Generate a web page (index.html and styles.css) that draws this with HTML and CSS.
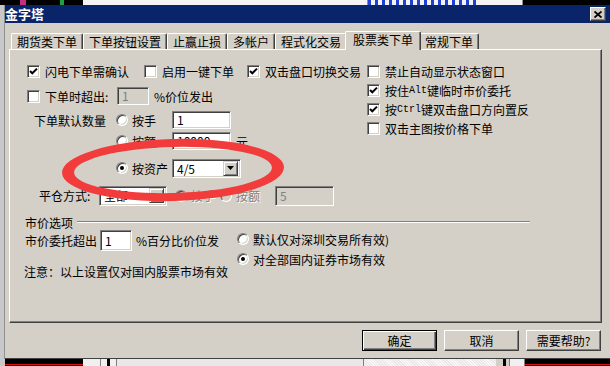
FILE: index.html
```html
<!DOCTYPE html>
<html lang="zh-CN">
<head>
  <meta charset="UTF-8">
  <title>金字塔</title>
  <link rel="stylesheet" href="styles.css">
</head>
<body>
<div class="screen">
  <!-- bits of the app behind the dialog -->
  <div class="strip-top">
    <div class="st-chart"></div>
    <div class="st-light"></div>
    <div class="st-blue"></div>
    <div class="st-light small"></div>
    <div class="st-dark"></div>
  </div>

  <div class="middle">
    <div class="strip-left"></div>

    <div class="dialog">
      <div class="titlebar">
        <span class="title">金字塔</span>
        <span class="close-btn">
          <svg width="8" height="7" viewBox="0 0 8 7"><path d="M0.5 0.5 L7.5 6.5 M7.5 0.5 L0.5 6.5" stroke="#000" stroke-width="1.8"/></svg>
        </span>
      </div>

      <div class="tabs">
        <div class="tab">期货类下单</div>
        <div class="tab">下单按钮设置</div>
        <div class="tab">止赢止损</div>
        <div class="tab">多帐户</div>
        <div class="tab">程式化交易</div>
        <div class="tab active">股票类下单</div>
        <div class="tab">常规下单</div>
      </div>

      <div class="panel">
        <div class="top">
          <div class="col-left">
            <div class="row row-a">
              <div class="opt w1"><span class="check on"><svg width="11" height="11" viewBox="0 0 11 11"><path d="M2 5 L4.3 7.3 L9 2.6" stroke="#000" stroke-width="2" fill="none"/></svg></span>闪电下单需确认</div>
              <div class="opt w2"><span class="check"></span>启用一键下单</div>
              <div class="opt w3"><span class="check on"><svg width="11" height="11" viewBox="0 0 11 11"><path d="M2 5 L4.3 7.3 L9 2.6" stroke="#000" stroke-width="2" fill="none"/></svg></span>双击盘口切换交易</div>
            </div>

            <div class="row row-b">
              <div class="opt"><span class="check"></span><span class="lbl-over">下单时超出:</span></div>
              <div class="field disabled small">1</div>
              <span class="after">%价位发出</span>
            </div>

            <div class="qty">
              <div class="qrow">
                <div class="qlabel">下单默认数量</div>
                <div class="qopt"><span class="radio"></span>按手</div>
                <div class="field wide">1</div>
              </div>
              <div class="qrow q2">
                <div class="qlabel"></div>
                <div class="qopt"><span class="radio"></span>按额</div>
                <div class="field wide">10000</div>
                <span class="unit">元</span>
              </div>
              <div class="qrow q3">
                <div class="qlabel"></div>
                <div class="qopt"><span class="radio on"></span>按资产</div>
                <div class="combo asset">
                  <span class="combo-text">4/5</span>
                  <span class="combo-btn"><svg width="7" height="4" viewBox="0 0 7 4"><path d="M0 0 H7 L3.5 4 Z" fill="#000"/></svg></span>
                </div>
              </div>
            </div>

            <div class="row close-row">
              <div class="close-label">平仓方式:</div>
              <div class="combo mode">
                <span class="combo-text">全部</span>
                <span class="combo-btn"><svg width="7" height="4" viewBox="0 0 7 4"><path d="M0 0 H7 L3.5 4 Z" fill="#000"/></svg></span>
              </div>
              <div class="opt dim first"><span class="radio off"></span>按手</div>
              <div class="opt dim"><span class="radio off"></span>按额</div>
              <div class="field disabled wide tall">5</div>
            </div>
          </div>

          <div class="col-right">
            <div class="rrow"><span class="check"></span>禁止自动显示状态窗口</div>
            <div class="rrow"><span class="check on"><svg width="11" height="11" viewBox="0 0 11 11"><path d="M2 5 L4.3 7.3 L9 2.6" stroke="#000" stroke-width="2" fill="none"/></svg></span>按住<span class="mono">Alt</span>键临时市价委托</div>
            <div class="rrow"><span class="check on"><svg width="11" height="11" viewBox="0 0 11 11"><path d="M2 5 L4.3 7.3 L9 2.6" stroke="#000" stroke-width="2" fill="none"/></svg></span>按<span class="mono">Ctrl</span>键双击盘口方向置反</div>
            <div class="rrow"><span class="check"></span>双击主图按价格下单</div>
          </div>
        </div>

        <div class="group">
          <div class="group-head"><span>市价选项</span><span class="etch"></span></div>
          <div class="market">
            <div class="market-left">
              <div class="mline">
                <span>市价委托超出</span>
                <div class="field narrow">1</div>
                <span class="after">%百分比价位发</span>
              </div>
              <div class="note">注意：以上设置仅对国内股票市场有效</div>
            </div>
            <div class="market-right">
              <div class="mopt"><span class="radio"></span>默认仅对深圳交易所有效)</div>
              <div class="mopt"><span class="radio on"></span>对全部国内证券市场有效</div>
            </div>
          </div>
        </div>
      </div>

      <div class="buttons">
        <div class="btn default">确定</div>
        <div class="btn">取消</div>
        <div class="btn">需要帮助?</div>
      </div>
    </div>
  </div>

  <div class="strip-bottom">
    <div class="sb-gap"></div>
    <div class="sb-black"></div>
    <div class="sb-light"></div>
    <div class="sb-hatch"></div>
    <div class="sb-light end"></div>
    <div class="sb-black wide"></div>
  </div>

  <!-- red hand-drawn mark over the dialog -->
  <svg class="mark" width="610" height="366" viewBox="0 0 610 366">
    <path fill="#f23b3b" fill-rule="evenodd" transform="rotate(-1.5 173 170)"
      d="M62 170 a111 31 0 1 0 222 0 a111 31 0 1 0 -222 0 Z M74 170 a99 23 0 1 0 198 0 a99 23 0 1 0 -198 0 Z"/>
  </svg>
</div>
</body>
</html>
```

FILE: styles.css
```css
* {
  box-sizing: border-box;
}

body {
  margin: 0;
  font-family: "Noto Sans CJK SC", "Liberation Sans", sans-serif;
  font-size: 12px;
  color: #000;
  background: #d4d0c8;
}

.screen {
  position: relative;
  width: 610px;
  height: 366px;
  overflow: hidden;
  display: flex;
  flex-direction: column;
}

/* background app */
.strip-top {
  height: 5px;
  display: flex;
  flex: none;
}

.st-chart {
  width: 83px;
  background: linear-gradient(90deg, #000 0 20px, #c03080 20px 26px, #000 26px 60px, #20a040 60px 64px, #000 64px);
}

.st-light {
  width: 285px;
  background: #f4f4f4;
  border-right: 1px solid #909090;
}

.st-light.small {
  width: 45px;
}

.st-blue {
  width: 110px;
  background: repeating-linear-gradient(90deg, #2040d0 0 3px, #f4f4f4 3px 7px);
}

.st-dark {
  flex: 1;
  background: #000;
}

.middle {
  display: flex;
  height: 354px;
  flex: none;
}

.strip-left {
  width: 5px;
  background: #c8c8c8;
  border-right: 1px solid #909090;
}

/* dialog */
.dialog {
  width: 605px;
  height: 354px;
  background: #d4d0c8;
  border-bottom: 1px solid #404040;
  display: flex;
  flex-direction: column;
}

.titlebar {
  height: 18px;
  flex: none;
  background: #0a246a;
  color: #fff;
  display: flex;
  align-items: center;
  justify-content: space-between;
  padding-right: 4px;
}

.title {
  font-size: 13px;
  font-weight: bold;
  line-height: 18px;
}

.close-btn {
  width: 16px;
  height: 14px;
  background: #d4d0c8;
  border: 1px solid;
  border-color: #fff #404040 #404040 #fff;
  box-shadow: inset -1px -1px #808080;
  display: flex;
  align-items: center;
  justify-content: center;
}

/* tabs */
.tabs {
  display: flex;
  align-items: flex-end;
  height: 18px;
  margin: 8px 0 0 6px;
  position: relative;
  z-index: 1;
  flex: none;
}

.tab {
  height: 16px;
  padding: 0 5px;
  border-top: 1px solid #fff;
  border-left: 1px solid #fff;
  border-right: 1px solid #404040;
  box-shadow: inset -1px 0 #808080;
  border-radius: 2px 2px 0 0;
  line-height: 15px;
  white-space: nowrap;
  background: #d4d0c8;
}

.tab.active {
  height: 19px;
  padding: 0 7px;
  margin: 0 -2px -1px;
  position: relative;
  z-index: 2;
}

.panel {
  margin-left: 4px;
  width: 593px;
  height: 274px;
  flex: none;
  border: 1px solid;
  border-color: #fff #404040 #404040 #fff;
  box-shadow: inset -1px -1px #808080;
  padding: 12px 0 0 17px;
}

.top {
  display: flex;
}

.col-left {
  width: 340px;
}

.row {
  display: flex;
  align-items: center;
  white-space: nowrap;
}

.row-a {
  height: 19px;
}

.row-b {
  height: 20px;
  margin-top: 5px;
}

.opt {
  display: flex;
  align-items: center;
  white-space: nowrap;
}

.w1 { width: 117px; }
.w2 { width: 103px; }
.w3 { width: 120px; }

.check {
  width: 13px;
  height: 13px;
  flex: none;
  margin-right: 5px;
  background: #fff;
  border: 1px solid;
  border-color: #808080 #fff #fff #808080;
  box-shadow: inset 1px 1px #404040, inset -1px -1px #d4d0c8;
  display: flex;
  align-items: center;
  justify-content: center;
}

.radio {
  width: 12px;
  height: 12px;
  flex: none;
  margin-right: 4px;
  border-radius: 50%;
  background: #fff;
  border: 1px solid;
  border-color: #808080 #fff #fff #808080;
  box-shadow: inset 1px 1px #404040, inset -1px -1px #d4d0c8;
  position: relative;
}

.radio.on::after {
  content: "";
  position: absolute;
  left: 3px;
  top: 3px;
  width: 4px;
  height: 4px;
  border-radius: 50%;
  background: #000;
}

.radio.off {
  background: #d4d0c8;
}

.lbl-over {
  width: 72px;
}

.field {
  height: 18px;
  background: #fff;
  border: 1px solid;
  border-color: #808080 #fff #fff #808080;
  box-shadow: inset 1px 1px #404040, inset -1px -1px #d4d0c8;
  padding-left: 4px;
  line-height: 16px;
  flex: none;
}

.field.small { width: 32px; }
.field.wide { width: 59px; }
.field.narrow { width: 32px; height: 21px; line-height: 19px; margin-left: 3px; }
.field.tall { height: 20px; line-height: 18px; }

.field.disabled {
  background: #d4d0c8;
  color: #808080;
}

.after {
  margin-left: 5px;
}

.qty {
  margin-top: 4px;
}

.qrow {
  display: flex;
  align-items: center;
  height: 20px;
  white-space: nowrap;
}

.qrow.q2 { margin-top: 1px; }
.qrow.q3 { margin-top: 7px; }

.qlabel {
  width: 89px;
  padding-left: 7px;
}

.qopt {
  width: 56px;
  display: flex;
  align-items: center;
}

.unit {
  margin-left: 5px;
}

.combo {
  height: 19px;
  background: #fff;
  border: 1px solid;
  border-color: #808080 #fff #fff #808080;
  box-shadow: inset 1px 1px #404040, inset -1px -1px #d4d0c8;
  display: flex;
  align-items: center;
  padding: 2px 2px 2px 4px;
  flex: none;
}

.combo.asset { width: 69px; }
.combo.mode { width: 68px; height: 20px; }

.combo-text {
  flex: 1;
}

.combo-btn {
  width: 15px;
  height: 15px;
  background: #d4d0c8;
  border: 1px solid;
  border-color: #d4d0c8 #404040 #404040 #d4d0c8;
  box-shadow: inset 1px 1px #fff, inset -1px -1px #808080;
  display: flex;
  align-items: center;
  justify-content: center;
}

.close-row {
  height: 21px;
  margin-top: 7px;
}

.close-label {
  width: 72px;
  padding-left: 12px;
}

.dim {
  color: #808080;
  text-shadow: 1px 1px #fff;
  margin-left: 5px;
}

.dim.first {
  margin-left: 8px;
}

.close-row .field {
  margin-left: 15px;
}

.col-right {
  display: flex;
  flex-direction: column;
}

.rrow {
  height: 19px;
  display: flex;
  align-items: center;
  white-space: nowrap;
}

.mono {
  font-family: "Liberation Mono", monospace;
  font-size: 10px;
}

/* market options */
.group {
  margin: 9px 0 0 -2px;
  width: 505px;
}

.group-head {
  height: 14px;
  display: flex;
  align-items: center;
}

.etch {
  flex: 1;
  height: 2px;
  margin-left: 4px;
  border-top: 1px solid #808080;
  border-bottom: 1px solid #fff;
}

.market {
  display: flex;
  align-items: flex-start;
}

.market-left {
  width: 212px;
  white-space: nowrap;
}

.mline {
  display: flex;
  align-items: center;
  height: 21px;
  margin-top: 1px;
}

.mline .after {
  margin-left: 4px;
}

.note {
  margin-top: 14px;
  line-height: 14px;
  margin-left: -1px;
}

.mopt {
  height: 20px;
  display: flex;
  align-items: center;
  white-space: nowrap;
}

/* bottom buttons */
.buttons {
  display: flex;
  justify-content: flex-end;
  gap: 7px;
  margin-top: 7px;
  padding-right: 9px;
  flex: none;
}

.btn {
  width: 75px;
  height: 21px;
  background: #d4d0c8;
  border: 1px solid;
  border-color: #fff #404040 #404040 #fff;
  box-shadow: inset -1px -1px #808080;
  display: flex;
  align-items: center;
  justify-content: center;
}

.btn.default {
  border: 1px solid #000;
  box-shadow: inset 1px 1px #fff, inset -1px -1px #404040, inset -2px -2px #808080;
}

.strip-bottom {
  flex: 1;
  display: flex;
}

.sb-gap {
  width: 5px;
  background: #c8c8c8;
}

.sb-black {
  width: 78px;
  background: linear-gradient(#000 0 5px, #e01010 5px 6px, #000 6px);
}

.sb-black.wide {
  width: auto;
  flex: 1;
}

.sb-light {
  width: 281px;
  background: linear-gradient(90deg, #f0f0f0 0 17px, #808080 17px 18px, #f0f0f0 18px 24px, #000 24px 27px, #f0f0f0 27px 33px, #808080 33px 34px, #e8e8e8 34px);
  border-right: 1px solid #808080;
}

.sb-hatch {
  width: 132px;
  background: repeating-linear-gradient(45deg, #e8e8e8 0 1px, #f8f8f8 1px 2px);
}

.sb-light.end {
  width: 29px;
  background: linear-gradient(90deg, #d4d0c8 0 7px, #000 7px 10px, #d4d0c8 10px 13px, #808080 13px 14px, #f0f0f0 14px);
}

.mark {
  position: absolute;
  left: 0;
  top: 0;
  pointer-events: none;
}
```
